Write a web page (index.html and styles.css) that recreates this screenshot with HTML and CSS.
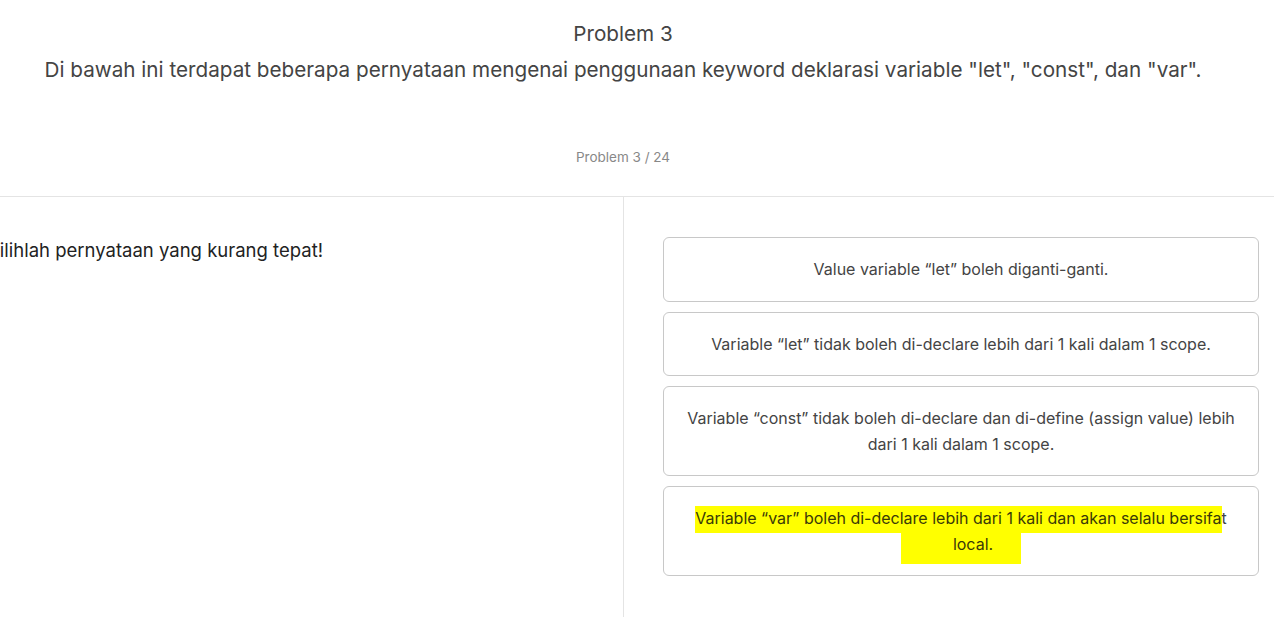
FILE: index.html
```html
<!DOCTYPE html>
<html lang="id">
<head>
<meta charset="utf-8">
<link rel="stylesheet" href="styles.css">
</head>
<body>
<header class="header">
  <h1 class="title">Problem 3</h1>
  <p class="subtitle">Di bawah ini terdapat beberapa pernyataan mengenai penggunaan keyword deklarasi variable "let", "const", dan "var".</p>
  <p class="counter">Problem 3 / 24</p>
</header>
<main class="panel">
  <section class="question">
    <p class="question-text">Pilihlah pernyataan yang kurang tepat!</p>
  </section>
  <section class="options">
    <div class="option">Value variable “let” boleh diganti-ganti.</div>
    <div class="option">Variable “let” tidak boleh di-declare lebih dari 1 kali dalam 1 scope.</div>
    <div class="option tall">Variable “const” tidak boleh di-declare dan di-define (assign value) lebih<br>dari 1 kali dalam 1 scope.</div>
    <div class="option tall"><span class="mark">Variable “var” boleh di-declare lebih dari 1 kali dan akan selalu bersifa</span>t<br><span class="mark mark-short">local.</span></div>
  </section>
</main>
</body>
</html>
```
FILE: styles.css
```css
* { box-sizing: border-box; }
html, body { margin: 0; padding: 0; background: #fff; }
body {
  font-family: "Inter", "Liberation Sans", sans-serif;
  color: #444;
  width: 1274px;
  height: 617px;
  overflow: hidden;
}
.header {
  padding: 20px 28px 0 0;
  text-align: center;
  height: 197px;
  border-bottom: 1px solid #e4e4e4;
}
.title {
  margin: 0;
  font-size: 20.7px;
  line-height: 28px;
  font-weight: 400;
  color: #444;
}
.subtitle {
  margin: 8px 0 0;
  font-size: 20.7px;
  line-height: 28px;
  color: #444;
}
.counter {
  margin: 64px 0 0;
  font-size: 13.5px;
  line-height: 18px;
  color: #888;
}
.panel {
  display: flex;
  height: 420px;
}
.question {
  width: 624px;
  border-right: 1px solid #e4e4e4;
  overflow: hidden;
  padding-top: 40px;
}
.question-text {
  margin: 0 0 0 -12px;
  font-size: 18.5px;
  line-height: 26px;
  color: #222;
}
.options {
  flex: 1;
  padding: 40px 15px 0 39px;
  display: flex;
  flex-direction: column;
  gap: 10px;
}
.option {
  border: 1px solid #c8c8c8;
  border-radius: 6px;
  height: 64.5px;
  padding: 0 10px;
  display: flex;
  align-items: center;
  justify-content: center;
  text-align: center;
  font-size: 16px;
  line-height: 26px;
  color: #444;
}
.option.tall {
  height: 90px;
  display: block;
  padding-top: 18px;
}
.mark {
  background: #ffff00;
  color: #3a3a08;
  padding: 2px 0 5px;
}
.mark-short {
  padding: 2px 28px 10px 52px;
}
```
